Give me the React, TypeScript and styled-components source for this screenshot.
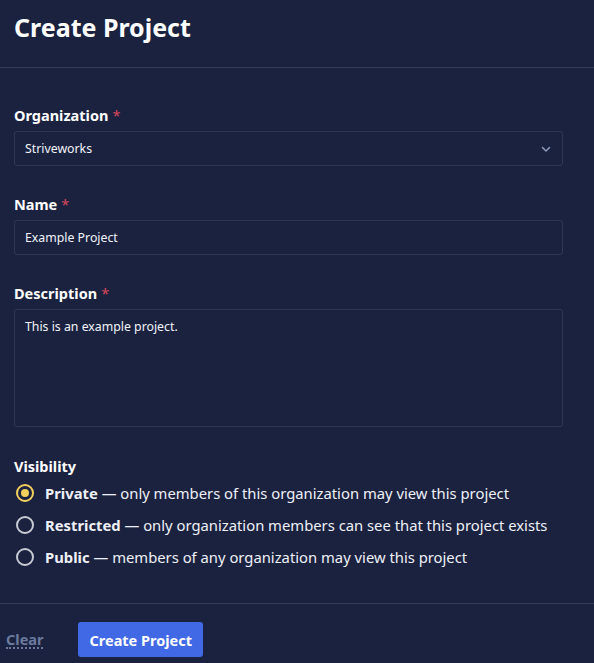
import styled, { createGlobalStyle } from 'styled-components';

const GlobalStyle = createGlobalStyle`
  html, body {
    margin: 0;
    padding: 0;
    background: #1b2240;
  }
  body {
    font-family: "Noto Sans", "Open Sans", sans-serif;
    color: #ffffff;
  }
`;

const Page = styled.div`
  width: 594px;
  min-height: 663px;
  background: #1b2240;
  display: flex;
  flex-direction: column;
`;

const Header = styled.div`
  height: 68px;
  padding: 0 14px;
  border-bottom: 1px solid #333b57;
  box-sizing: border-box;
`;

const Title = styled.h1`
  margin: 0;
  padding-top: 10px;
  font-size: 25px;
  font-weight: 700;
  line-height: 34px;
`;

const Form = styled.div`
  padding: 37px 31px 0 14px;
  display: flex;
  flex-direction: column;
  gap: 28px;
`;

const Field = styled.div`
  display: flex;
  flex-direction: column;
  gap: 6px;
`;

const Label = styled.label`
  font-size: 14.5px;
  font-weight: 700;
  line-height: 20px;
`;

const Required = styled.span`
  color: #d9475c;
  font-weight: 400;
  margin-left: 4px;
`;

const Box = styled.div<{ $tall?: boolean }>`
  box-sizing: border-box;
  height: ${p => (p.$tall ? '118px' : '35px')};
  border: 1px solid #2f3754;
  border-radius: 3px;
  padding: ${p => (p.$tall ? '8px 10px' : '0 10px')};
  display: flex;
  align-items: ${p => (p.$tall ? 'flex-start' : 'center')};
  justify-content: space-between;
  font-size: 12.3px;
  color: #f2f4f8;
`;

const Visibility = styled.div`
  display: flex;
  flex-direction: column;
  gap: 1px;
  margin-top: 1px;
`;

const Options = styled.div`
  display: flex;
  flex-direction: column;
`;

const Option = styled.div`
  height: 32px;
  display: flex;
  align-items: center;
  gap: 11px;
  padding-left: 2px;
  font-size: 14.8px;
  color: #eef0f6;
`;

const Radio = styled.span<{ $checked?: boolean }>`
  box-sizing: border-box;
  width: 18px;
  height: 18px;
  border-radius: 50%;
  border: 2px solid ${p => (p.$checked ? '#f3cf5b' : '#c9cbd3')};
  display: flex;
  align-items: center;
  justify-content: center;
  &::after {
    content: '';
    width: 8px;
    height: 8px;
    border-radius: 50%;
    background: ${p => (p.$checked ? '#f3cf5b' : 'transparent')};
  }
`;

const Footer = styled.div`
  margin-top: 30px;
  border-top: 1px solid #333b57;
  padding: 18px 6px 0;
  display: flex;
  align-items: center;
  gap: 35px;
`;

const ClearLink = styled.span`
  font-size: 14.5px;
  font-weight: 700;
  color: #6b7a9e;
  border-bottom: 2px dotted #6b7a9e;
  line-height: 16px;
`;

const PrimaryButton = styled.button`
  height: 35px;
  padding: 0 11px;
  border: none;
  border-radius: 3px;
  background: #4169e6;
  color: #ffffff;
  font-family: inherit;
  font-size: 14.5px;
  font-weight: 700;
`;

const Chevron = () => (
  <svg width="12" height="12" viewBox="0 0 12 12" fill="none">
    <path d="M2.5 4.5 6 8l3.5-3.5" stroke="#8f9ab8" strokeWidth="1.5" strokeLinecap="round" strokeLinejoin="round" />
  </svg>
);

const options = [
  { name: 'Private', text: 'only members of this organization may view this project', checked: true },
  { name: 'Restricted', text: 'only organization members can see that this project exists' },
  { name: 'Public', text: 'members of any organization may view this project' },
];

export default function App() {
  return (
    <Page>
      <GlobalStyle />
      <Header>
        <Title>Create Project</Title>
      </Header>
      <Form>
        <Field>
          <Label>Organization<Required>*</Required></Label>
          <Box>
            Striveworks
            <Chevron />
          </Box>
        </Field>
        <Field>
          <Label>Name<Required>*</Required></Label>
          <Box>Example Project</Box>
        </Field>
        <Field>
          <Label>Description<Required>*</Required></Label>
          <Box $tall>This is an example project.</Box>
        </Field>
        <Visibility>
          <Label>Visibility</Label>
          <Options>
            {options.map(o => (
              <Option key={o.name}>
                <Radio $checked={o.checked} />
                <span><b>{o.name}</b> — {o.text}</span>
              </Option>
            ))}
          </Options>
        </Visibility>
      </Form>
      <Footer>
        <ClearLink>Clear</ClearLink>
        <PrimaryButton>Create Project</PrimaryButton>
      </Footer>
    </Page>
  );
}
